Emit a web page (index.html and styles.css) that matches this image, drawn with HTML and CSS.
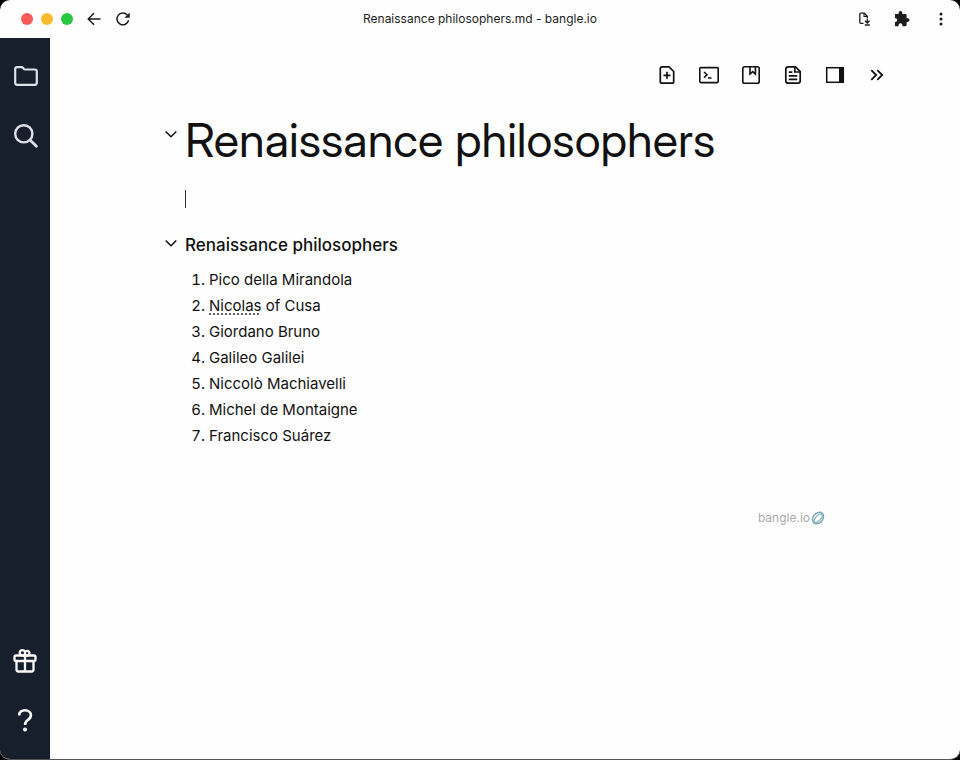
FILE: index.html
```html
<!DOCTYPE html>
<html lang="en">
<head>
<meta charset="utf-8">
<meta name="viewport" content="width=device-width, initial-scale=1">
<title>Renaissance philosophers.md - bangle.io</title>
<link rel="stylesheet" href="styles.css">
</head>
<body>
<div class="window">
  <header class="titlebar">
    <div class="titlebar-left">
      <button class="light light-close" aria-label="Close"></button>
      <button class="light light-minimize" aria-label="Minimize"></button>
      <button class="light light-zoom" aria-label="Zoom"></button>
      <button class="icon-button nav-button" aria-label="Back">
        <svg width="16" height="16" viewBox="0 0 16 16" fill="none" stroke="currentColor" stroke-width="1.400"><path d="M14.500 8H2.500M8 2.200 2.200 8 8 13.800"/></svg>
      </button>
      <button class="icon-button nav-button" aria-label="Reload">
        <svg width="16" height="16" viewBox="0 0 16 16"><path d="M13.600 9.300A5.900 5.900 0 1 1 12.300 4" fill="none" stroke="currentColor" stroke-width="1.500"/><path d="M14.700 1.500v5.300H9.400z" fill="currentColor"/></svg>
      </button>
    </div>
    <span class="title">Renaissance philosophers.md - bangle.io</span>
    <div class="titlebar-right">
      <button class="icon-button" aria-label="Install app">
        <svg width="16" height="16" viewBox="0 0 16 16" fill="none" stroke="currentColor" stroke-width="1.300"><path d="M6.500 12.300H3.800Q2.800 12.300 2.800 11.300V3.200Q2.800 2.200 3.800 2.200H7.200L10.300 5.300V7"/><path d="M7 2v3.500h3.500" stroke-width="1.100"/><path d="M10.300 7.500V11.500M8 9.700l2.300 2.300 2.300-2.300M7.800 14h5"/></svg>
      </button>
      <button class="icon-button" aria-label="Extensions">
        <svg width="16" height="16" viewBox="3 1 22 22" fill="currentColor"><path d="M20.500 11H19V7a2 2 0 0 0-2-2h-4V3.500a2.500 2.500 0 0 0-5 0V5H4a2 2 0 0 0-2 2v3.800h1.500a2.700 2.700 0 0 1 0 5.400H2V20a2 2 0 0 0 2 2h3.800v-1.500a2.700 2.700 0 0 1 5.400 0V22H17a2 2 0 0 0 2-2v-4h1.500a2.500 2.500 0 0 0 0-5z"/></svg>
      </button>
      <button class="icon-button" aria-label="Menu">
        <svg width="16" height="16" viewBox="0 0 16 16" fill="currentColor"><circle cx="8" cy="3" r="1.500"/><circle cx="8" cy="8" r="1.500"/><circle cx="8" cy="13" r="1.500"/></svg>
      </button>
    </div>
  </header>
  <div class="workspace">
    <nav class="sidebar" aria-label="Activity bar">
      <button class="icon-button side-button" aria-label="Files">
        <svg width="28" height="28" viewBox="0 0 28 28" fill="none" stroke="currentColor" stroke-width="2.200" stroke-linejoin="round"><path d="M4.200 7.200Q4.200 5.200 6.200 5.200H10.500Q11.500 5.200 12.100 6L12.800 6.900Q13.300 7.500 14.300 7.500H23.800Q25.800 7.500 25.800 9.500V20.800Q25.800 22.800 23.800 22.800H6.200Q4.200 22.800 4.200 20.800Z"/></svg>
      </button>
      <button class="icon-button side-button" aria-label="Search">
        <svg width="28" height="28" viewBox="0 0 28 28" fill="none" stroke="currentColor" stroke-width="2.400" stroke-linecap="round"><circle cx="12.800" cy="11.800" r="8.600"/><path d="m19.200 18.200 6.200 6" stroke-width="2.800"/></svg>
      </button>
      <button class="icon-button side-button side-bottom" aria-label="What's new">
        <svg width="28" height="28" viewBox="0 0 28 28" fill="none" stroke="currentColor" stroke-width="2.300" stroke-linejoin="round"><rect x="3.500" y="8.500" width="21" height="5.500" rx="1.500"/><path d="M5.500 14v8.500Q5.500 24.500 7.500 24.500h13Q22.500 24.500 22.500 22.500V14M14 8.500V24.500"/><path d="M14 8.500H11.200a2.700 2.700 0 1 1 2.800-3.400 2.400 2.400 0 1 1 2.800 3.400H14V4.900"/></svg>
      </button>
      <button class="icon-button side-button" aria-label="Help">
        <svg width="28" height="28" viewBox="0 0 28 28"><path d="M8.200 8.400C8.200 5.100 10.500 3.300 14 3.300s5.900 2 5.900 5c0 2.400-1.200 3.600-3.200 4.900-2 1.300-2.600 2.200-2.600 4.700" fill="none" stroke="currentColor" stroke-width="2.600"/><circle cx="14" cy="22.600" r="2" fill="currentColor"/></svg>
      </button>
    </nav>
    <main class="page">
      <div class="toolbar" role="toolbar" aria-label="Note actions">
        <button class="icon-button" aria-label="New note">
          <svg width="20" height="20" viewBox="0 0 20 20" fill="none" stroke="currentColor" stroke-width="1.700"><path d="M3.300 3.600Q3.300 1.800 5.100 1.800H12L16.700 6.500V16.400Q16.700 18.200 14.900 18.200H5.100Q3.300 18.200 3.300 16.400Z"/><path d="M10 6.800v7M6.500 10.300h7"/></svg>
        </button>
        <button class="icon-button" aria-label="Command palette">
          <svg width="20" height="20" viewBox="0 0 20 20" fill="none" stroke="currentColor" stroke-width="1.600"><rect x="0.800" y="2.600" width="18.400" height="15" rx="1"/><path d="m5 7 3 2.800L5 12.600M9 12.900h3.500" stroke-width="1.500"/></svg>
        </button>
        <button class="icon-button" aria-label="Switch workspace">
          <svg width="20" height="20" viewBox="0 0 20 20" fill="none" stroke="currentColor" stroke-width="1.600"><rect x="1.800" y="1.800" width="16.400" height="16.400" rx="1.800"/><path d="M9 2v7l2.700-2.400L14.400 9V2"/></svg>
        </button>
        <button class="icon-button" aria-label="Notes">
          <svg width="20" height="20" viewBox="0 0 20 20" fill="none" stroke="currentColor" stroke-width="1.700"><path d="M2.800 4.200Q2.800 1.800 5.200 1.800H12.500L17.200 6.500V15.800Q17.200 18.200 14.800 18.200H5.200Q2.800 18.200 2.800 15.800Z"/><path d="M11.800 2v5H17M5.800 7.200h3.500M5.800 10.800h8.400M5.800 14.300h8.400"/></svg>
        </button>
        <button class="icon-button" aria-label="Split screen">
          <svg width="20" height="20" viewBox="0 0 20 20"><rect x="1.700" y="2.700" width="16.600" height="14.600" fill="none" stroke="currentColor" stroke-width="1.500"/><path d="M14 2.500h4.500v15H14z" fill="currentColor"/></svg>
        </button>
        <button class="icon-button" aria-label="More">
          <svg width="20" height="20" viewBox="0 0 20 20" fill="none" stroke="currentColor" stroke-width="1.800"><path d="m4.300 5.200 4.900 4.800-4.900 4.800M10.300 5.200l4.900 4.800-4.900 4.800"/></svg>
        </button>
      </div>
      <article class="note">
        <div class="heading-row heading-row-large">
          <button class="icon-button fold" aria-label="Collapse title"><svg width="12" height="12" viewBox="0 0 12 12" fill="none" stroke="currentColor" stroke-width="1.500"><path d="m.700 3.500 5.300 5.200 5.300-5.200"/></svg></button>
          <h1>Renaissance philosophers</h1>
        </div>
        <p class="draft"><span class="caret"></span></p>
        <div class="heading-row">
          <button class="icon-button fold" aria-label="Collapse section"><svg width="12" height="12" viewBox="0 0 12 12" fill="none" stroke="currentColor" stroke-width="1.500"><path d="m.700 3.500 5.300 5.200 5.300-5.200"/></svg></button>
          <h3>Renaissance philosophers</h3>
        </div>
        <ol>
          <li>Pico della Mirandola</li>
          <li><span class="flagged">Nicolas</span> of Cusa</li>
          <li>Giordano Bruno</li>
          <li>Galileo Galilei</li>
          <li>Niccolò Machiavelli</li>
          <li>Michel de Montaigne</li>
          <li>Francisco Suárez</li>
        </ol>
        <footer class="brand">
          <a href="#">bangle.io<svg width="14" height="14" viewBox="0 0 14 14" fill="none"><g transform="rotate(42 7 7)"><ellipse cx="7" cy="7" rx="4.800" ry="6.300" stroke="#78a3b3" stroke-width="1.500"/><ellipse cx="7.300" cy="7" rx="2.500" ry="5.300" stroke="#8cb8c6" stroke-width="1.300"/></g></svg></a>
        </footer>
      </article>
    </main>
  </div>
</div>
</body>
</html>
```
FILE: styles.css
```css
* {
  box-sizing: border-box;
}

body {
  margin: 0;
  background: #000;
  color: #111;
  font-family: Inter, "Liberation Sans", sans-serif;
  font-size: 15px;
  line-height: 26px;
}

.window {
  display: flex;
  flex-direction: column;
  min-height: 100vh;
  border-bottom: 1px solid #555;
  border-radius: 10px;
  background: #fefefe;
  overflow: hidden;
}

button {
  padding: 0;
  border: 0;
  background: none;
  color: inherit;
  font: inherit;
}

.icon-button {
  display: flex;
  align-items: center;
  justify-content: center;
}

.titlebar {
  display: grid;
  grid-template-columns: 1fr auto 1fr;
  align-items: center;
  height: 38px;
  padding: 0 11px;
  color: #1c1c1c;
}

.titlebar-left,
.titlebar-right {
  display: flex;
  align-items: center;
}

.titlebar-left {
  gap: 8px;
  padding-left: 10px;
}

.titlebar-right {
  justify-content: flex-end;
  gap: 22px;
}

.light {
  width: 12px;
  height: 12px;
  border-radius: 50%;
}

.light-close {
  background: #fc5b57;
}

.light-minimize {
  background: #fcba2d;
}

.light-zoom {
  background: #27c840;
}

.nav-button {
  margin-left: 5px;
}

.title {
  font-size: 12px;
}

.workspace {
  display: flex;
  flex: 1;
}

.sidebar {
  display: flex;
  flex-direction: column;
  gap: 32px;
  width: 50px;
  padding: 24px 0;
  background: #171f2c;
  color: #dde2ea;
}

.side-button {
  height: 28px;
}

.side-bottom {
  margin-top: auto;
}

.side-bottom,
.side-bottom + .side-button {
  color: #fafafa;
}

.page {
  flex: 1;
  padding: 27px 32px;
}

.toolbar {
  display: flex;
  justify-content: flex-end;
  gap: 22px;
  padding-right: 41px;
}

.note {
  max-width: 640px;
  margin: 25px auto 0;
}

.heading-row {
  display: flex;
  gap: 8px;
  margin-left: -20px;
}

.fold {
  height: 24px;
}

.heading-row-large .fold {
  height: 48px;
}

h1,
h3 {
  margin: 0;
}

h1 {
  font-family: "Inter Display", Inter, "Liberation Sans", sans-serif;
  font-size: 47px;
  font-weight: 400;
  line-height: 60px;
}

h3 {
  font-size: 17px;
  font-weight: 500;
  line-height: 28px;
}

.draft {
  display: flex;
  align-items: center;
  height: 28px;
  margin: 15px 0 18px;
}

.caret {
  height: 18px;
  border-left: 1px solid #333;
}

ol {
  margin: 8px 0 0;
  padding-left: 24px;
}

.flagged {
  text-decoration: underline dotted #666 2px;
  text-underline-offset: 2px;
}

.brand {
  display: flex;
  justify-content: flex-end;
  margin-top: 56px;
}

.brand a {
  display: flex;
  align-items: center;
  gap: 1px;
  color: #aaa;
  font-size: 12px;
  text-decoration: none;
}
```
